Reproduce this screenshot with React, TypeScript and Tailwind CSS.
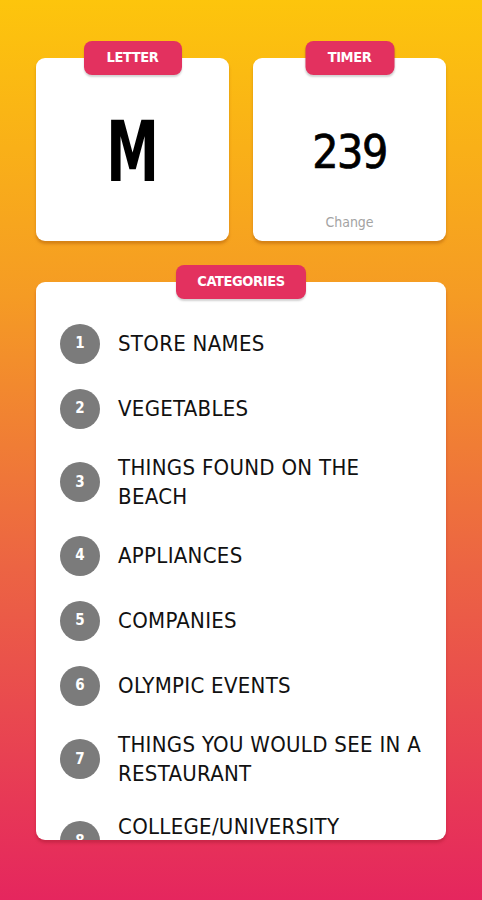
import React from "react";

const F = { fontFamily: '"DejaVu Sans Condensed", "DejaVu Sans", sans-serif' };

const cats = [
  "STORE NAMES",
  "VEGETABLES",
  "THINGS FOUND ON THE BEACH",
  "APPLIANCES",
  "COMPANIES",
  "OLYMPIC EVENTS",
  "THINGS YOU WOULD SEE IN A RESTAURANT",
  "COLLEGE/UNIVERSITY MAJORS",
  "THINGS THAT HAVE WHEELS",
  "CARTOON CHARACTERS",
];

function Badge({ label, w }: { label: string; w: string }) {
  return (
    <div
      className={`absolute left-1/2 -translate-x-1/2 top-[-17px] h-[34px] ${w} rounded-[8px] bg-[#e3315f] shadow-[0_2px_2px_rgba(0,0,0,0.18)] flex items-center justify-center text-white font-bold text-[14.5px] tracking-[-0.4px]`}
      style={F}
    >
      {label}
    </div>
  );
}

export default function App() {
  return (
    <div
      className="w-[482px] h-[900px] overflow-hidden bg-[linear-gradient(180deg,#fdc50c_0%,#f59b24_33%,#ec6443_63%,#e5265e_100%)] px-[36px] pt-[58px]"
      style={F}
    >
      <div className="flex gap-[24px]">
        <div className="relative w-[193px] h-[183px] bg-white rounded-[9px] shadow-[0_3px_3px_rgba(150,70,0,0.35)]">
          <Badge label="LETTER" w="w-[98px]" />
          <div className="h-full flex items-center justify-center pt-[4px]">
            <span className="text-[84px] font-bold leading-none text-black inline-block scale-x-[0.7]">M</span>
          </div>
        </div>
        <div className="relative w-[193px] h-[183px] bg-white rounded-[9px] shadow-[0_3px_3px_rgba(150,70,0,0.35)]">
          <Badge label="TIMER" w="w-[89px]" />
          <div className="h-full flex flex-col items-center">
            <div className="mt-[71px] text-[46px] leading-none text-black tracking-[-1.5px] [-webkit-text-stroke:0.7px_black]">239</div>
            <div className="mt-[40px] text-[14px] leading-none text-[#a3a3a3]">Change</div>
          </div>
        </div>
      </div>
      <div className="relative mt-[41px] w-[410px] h-[558px] bg-white rounded-[9px] shadow-[0_3px_3px_rgba(150,20,40,0.35)]">
        <Badge label="CATEGORIES" w="w-[130px]" />
        <div className="h-full overflow-hidden rounded-[9px] pt-[29px] pl-[24px] pr-[20px]">
          {cats.map((c, i) => (
            <div key={i} className="flex items-center min-h-[65px] py-[12px]">
              <div className="w-[40px] h-[40px] shrink-0 rounded-full bg-[#7b7b7b] flex items-center justify-center text-white font-bold text-[15px]">
                {i + 1}
              </div>
              <div className="ml-[18px] text-[22px] leading-[29px] text-[#111] tracking-[0.3px]">{c}</div>
            </div>
          ))}
        </div>
      </div>
    </div>
  );
}
